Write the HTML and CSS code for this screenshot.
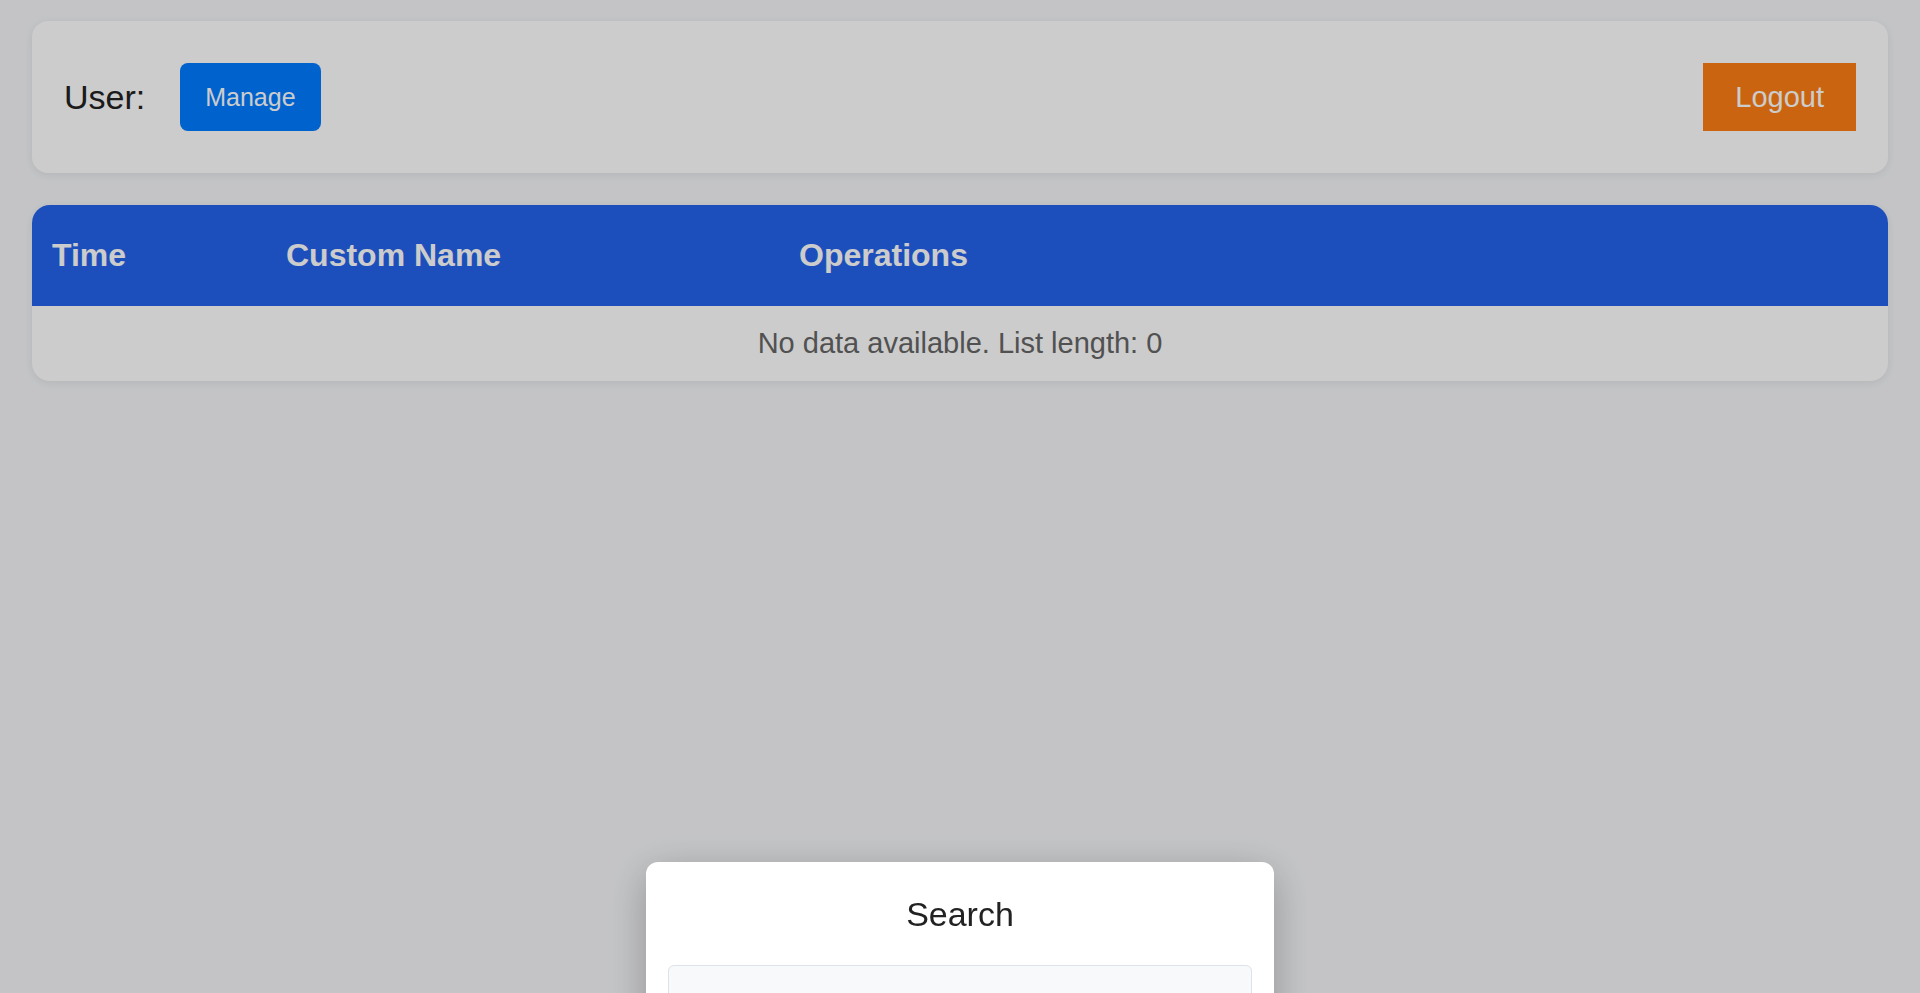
FILE: index.html
```html
<!DOCTYPE html>
<html lang="en">
<head>
<meta charset="UTF-8">
<meta name="viewport" content="width=device-width, initial-scale=1.0">
<title>Records</title>
<link rel="stylesheet" href="styles.css">
</head>
<body>

<div class="page">
    <div class="user-bar">
        <span class="user-label">User:</span>
        <button class="btn-manage">Manage</button>
        <button class="btn-logout">Logout</button>
    </div>

    <div class="table-card">
        <table id="records-table">
            <colgroup>
                <col class="col-time">
                <col class="col-name">
                <col>
            </colgroup>
            <thead>
                <tr>
                    <th>Time</th>
                    <th>Custom Name</th>
                    <th>Operations</th>
                </tr>
            </thead>
            <tbody id="table-body">
                <tr>
                    <td class="empty" colspan="3">No data available. List length: 0</td>
                </tr>
            </tbody>
        </table>
    </div>
</div>

<!-- search dialog -->
<div class="overlay">
    <div class="modal">
        <h2>Search</h2>
        <input type="text" class="search-input" id="search">
    </div>
</div>

</body>
</html>
```

FILE: styles.css
```css
html, body {
    height: 100%;
}
body {
    margin: 0;
    background: #f5f6f9;
    font-family: "Liberation Sans", Arial, sans-serif;
    overflow: hidden;
}
button {
    font-family: inherit;
    border: none;
    color: #fff;
    cursor: pointer;
}
.page {
    display: flex;
    flex-direction: column;
    gap: 32px;
    padding: 21px 32px;
}
.user-bar {
    display: flex;
    align-items: center;
    padding: 42px 32px;
    background: #fff;
    border-radius: 16px;
    box-shadow: 0 2px 10px rgba(0, 0, 0, 0.08);
}
.user-label {
    font-size: 34px;
    color: #222;
    margin-right: 35px;
}
.btn-manage {
    height: 68px;
    padding: 0 25px;
    background: #007bff;
    border-radius: 8px;
    font-size: 25px;
}
.btn-logout {
    margin-left: auto;
    height: 68px;
    padding: 0 32px;
    background: #fd7e14;
    font-size: 29px;
}
.table-card {
    background: #fff;
    border-radius: 18px;
    overflow: hidden;
    box-shadow: 0 2px 10px rgba(0, 0, 0, 0.08);
}
table {
    width: 100%;
    border-collapse: collapse;
    table-layout: fixed;
}
.col-time {
    width: 234px;
}
.col-name {
    width: 513px;
}
th {
    background: #2563eb;
    color: #fff;
    font-size: 32px;
    text-align: left;
    padding: 32px 20px;
}
td.empty {
    text-align: center;
    font-size: 29px;
    color: #666;
    padding: 21px 20px;
}
.overlay {
    position: fixed;
    inset: 0;
    background: rgba(0, 0, 0, 0.2);
    display: flex;
    justify-content: center;
    align-items: flex-start;
}
.modal {
    width: 628px;
    box-sizing: border-box;
    margin-top: 862px;
    padding: 33px 22px 24px;
    background: #fff;
    border-radius: 12px;
    box-shadow: 0 10px 40px rgba(0, 0, 0, 0.25);
}
.modal h2 {
    margin: 0 0 31px;
    font-size: 34px;
    font-weight: normal;
    text-align: center;
    color: #222;
}
.search-input {
    display: block;
    width: 100%;
    height: 48px;
    box-sizing: border-box;
    border: 1px solid #dde2e8;
    border-radius: 6px;
    background: #f7f9fb;
    font-size: 20px;
    padding: 0 12px;
}
```
